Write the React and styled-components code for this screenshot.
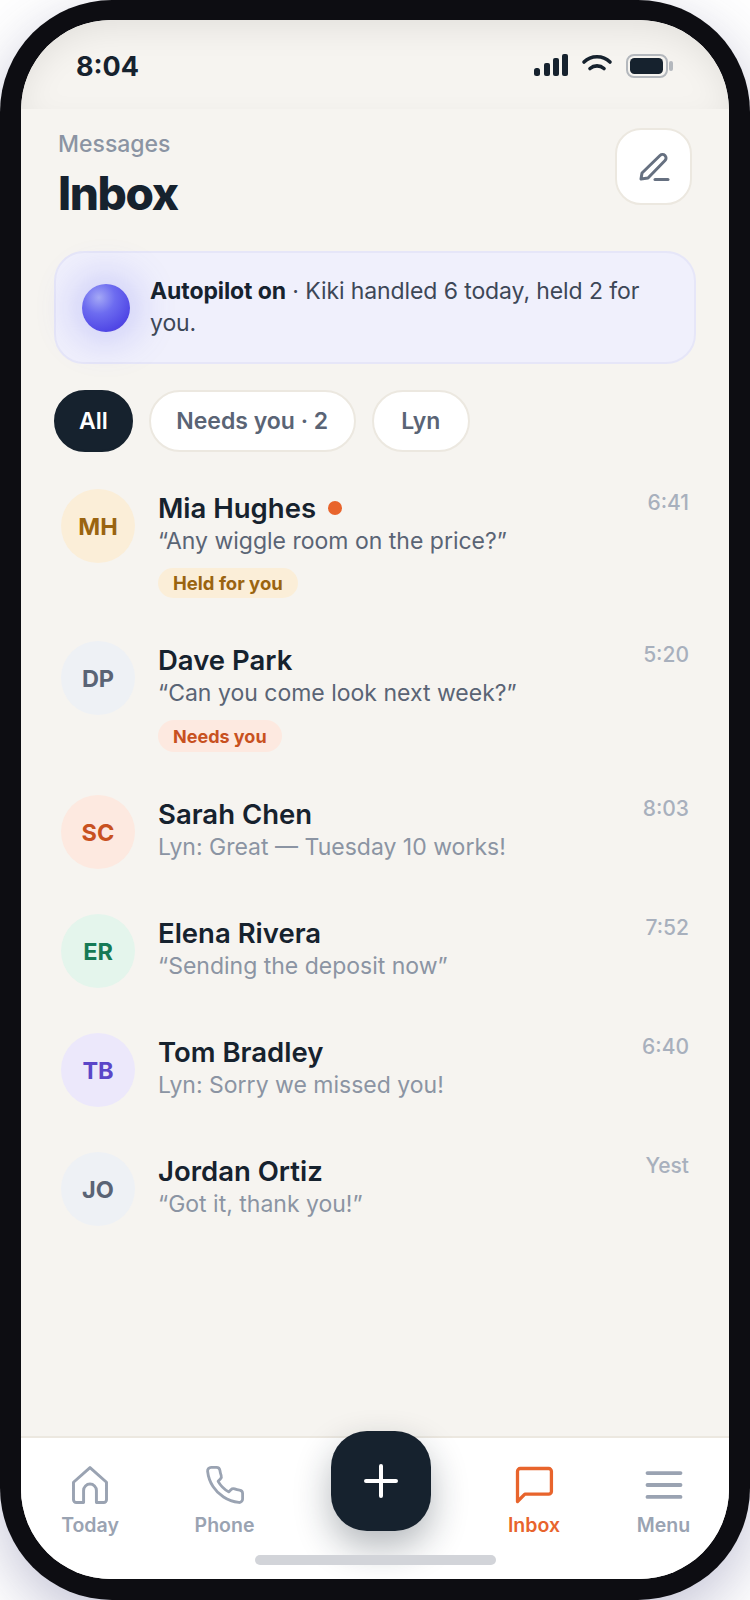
import React from 'react';
import styled, { createGlobalStyle } from 'styled-components';

const Global = createGlobalStyle`
    html, body {
        margin: 0;
        padding: 0;
        background: #fff;
    }
    body {
        width: 750px;
        height: 1600px;
        overflow: hidden;
        font-family: Inter, "Liberation Sans", sans-serif;
        -webkit-font-smoothing: antialiased;
    }
`;

const Phone = styled.div`
    width: 750px;
    height: 1600px;
    box-sizing: border-box;
    padding: 20px 21px 21px;
    background: #0d0d12;
    border-radius: 112px;
    box-shadow: 0 20px 60px rgba(60, 60, 120, .3);
`;

const Screen = styled.div`
    position: relative;
    height: 100%;
    display: flex;
    flex-direction: column;
    overflow: hidden;
    background: #f6f4f0;
    border-radius: 90px;
`;

const StatusBar = styled.div`
    flex: none;
    height: 89px;
    box-sizing: border-box;
    padding: 3px 55px 0 55px;
    display: flex;
    align-items: center;
    justify-content: space-between;
    background: #f6f4f0;
    border-radius: 90px 90px 0 0;
    box-shadow: inset 0 12px 36px -6px rgba(0, 0, 0, .09);
`;

const Clock = styled.span`
    font-size: 27px;
    font-weight: 700;
    color: #16222e;
`;

const StatusIcons = styled.div`
    display: flex;
    align-items: center;
`;

const Content = styled.div`
    flex: 1;
    min-height: 0;
    padding: 20px 33px 0 33px;
`;

const Header = styled.div`
    display: flex;
    justify-content: space-between;
    align-items: flex-start;
    height: 92px;
    padding: 0 4px;
`;

const Eyebrow = styled.div`
    font-size: 23px;
    line-height: 30px;
    font-weight: 500;
    color: #8b94a3;
`;

const Title = styled.h1`
    margin: 6px 0 0;
    font-size: 46px;
    line-height: 56px;
    font-weight: 800;
    letter-spacing: -1.4px;
    color: #16222e;
`;

const ComposeButton = styled.button`
    width: 77px;
    height: 77px;
    margin-top: -1px;
    padding: 0;
    border: 2px solid #ece8e0;
    border-radius: 26px;
    background: #fff;
    display: flex;
    align-items: center;
    justify-content: center;
`;

const Banner = styled.div`
    margin-top: 30px;
    height: 113px;
    box-sizing: border-box;
    display: flex;
    align-items: center;
    gap: 20px;
    padding: 0 28px 2px 26px;
    background: #f0f0fc;
    border: 2px solid #e6e6f8;
    border-radius: 30px;
`;

const Orb = styled.div`
    flex: none;
    width: 48px;
    height: 48px;
    margin-top: 2px;
    border-radius: 50%;
    background: radial-gradient(circle at 35% 28%, #a4a8f6 0%, #6d6cf0 35%, #4f46e5 75%, #6a3fb0 100%);
    box-shadow: 0 0 36px 10px rgba(99, 102, 241, .25);
`;

const BannerText = styled.div`
    font-size: 23px;
    line-height: 32px;
    letter-spacing: -.1px;
    color: #3d4757;
`;

const Strong = styled.strong`
    font-weight: 700;
    color: #16222e;
`;

const Chips = styled.div`
    margin-top: 26px;
    display: flex;
    gap: 16px;
`;

const Chip = styled.div`
    height: 62px;
    box-sizing: border-box;
    padding: 0 ${props => props.$pad || 25.5}px;
    display: flex;
    align-items: center;
    border-radius: 31px;
    font-size: 23px;
    font-weight: 600;
    border: 2px solid ${props => (props.$active ? '#16222e' : '#ece8e0')};
    background: ${props => (props.$active ? '#16222e' : '#fff')};
    color: ${props => (props.$active ? '#fff' : '#5a6475')};
`;

const List = styled.div`
    margin-top: 37px;
    padding: 0 7px;
`;

const Row = styled.div`
    display: flex;
    align-items: flex-start;
    gap: 23px;
    margin-bottom: ${props => (props.$tagged ? '43px' : '45px')};
`;

const Avatar = styled.div`
    flex: none;
    width: 74px;
    height: 74px;
    border-radius: 50%;
    display: flex;
    align-items: center;
    justify-content: center;
    font-size: 23.5px;
    font-weight: 700;
    background: ${props => props.$bg};
    color: ${props => props.$fg};
`;

const RowBody = styled.div`
    flex: 1;
    min-width: 0;
    padding-top: 1px;
`;

const NameLine = styled.div`
    display: flex;
    align-items: center;
    gap: 12px;
    height: 36px;
`;

const Name = styled.div`
    font-size: 27.5px;
    line-height: 36px;
    font-weight: 600;
    color: #16222e;
`;

const UnreadDot = styled.span`
    width: 14px;
    height: 14px;
    border-radius: 50%;
    background: #e8642c;
`;

const Preview = styled.div`
    font-size: 23px;
    line-height: 32px;
    margin-top: -1px;
    color: ${props => (props.$muted ? '#8b94a3' : '#5a6475')};
`;

const Tag = styled.div`
    width: fit-content;
    margin-top: 11px;
    height: ${props => (props.$kind === 'held' ? '30px' : '32px')};
    padding: 0 15px;
    border-radius: 16px;
    display: flex;
    align-items: center;
    font-size: ${props => (props.$kind === 'held' ? '18.5px' : '18px')};
    font-weight: 700;
    background: ${props => (props.$kind === 'held' ? '#fbeed8' : '#fde9e0')};
    color: ${props => (props.$kind === 'held' ? '#9a6410' : '#c8511f')};
`;

const Time = styled.div`
    flex: none;
    font-size: 21px;
    line-height: 26px;
    font-weight: 500;
    color: #a8b0bd;
    margin-top: 1px;
`;

const TabBar = styled.nav`
    flex: none;
    height: 143px;
    box-sizing: border-box;
    display: grid;
    grid-template-columns: 138px 131px 180px 128px 131px;
    background: #fff;
    border-top: 2px solid #ece8e0;
`;

const Tab = styled.div`
    display: flex;
    flex-direction: column;
    align-items: center;
    padding-top: 25px;
    gap: 5px;
    font-size: 19.5px;
    line-height: 26px;
    font-weight: 600;
    color: ${props => (props.$active ? '#e8642c' : '#9aa3b2')};
`;

const Fab = styled.button`
    position: absolute;
    left: 310px;
    bottom: 48px;
    width: 100px;
    height: 100px;
    padding: 0;
    border: 0;
    border-radius: 36px;
    background: #16222e;
    box-shadow: 0 16px 36px rgba(22, 34, 46, .32);
    display: flex;
    align-items: center;
    justify-content: center;
`;

const HomeBar = styled.div`
    position: absolute;
    left: 234px;
    bottom: 14px;
    width: 241px;
    height: 10px;
    border-radius: 5px;
    background: #d2d4d9;
`;

const Icon = ({ children, color = 'currentColor', width = 44, view = '0 0 24 24', sw = 1.6 }) => (
    <svg width={width} height={width} viewBox={view} fill="none" stroke={color} strokeWidth={sw} strokeLinecap="round" strokeLinejoin="round">
        {children}
    </svg>
);

const rows = [
    { id: 'MH', name: 'Mia Hughes', text: '“Any wiggle room on the price?”', time: '6:41', bg: '#fbeed8', fg: '#9a6410', dot: true, tag: 'held', tagText: 'Held for you' },
    { id: 'DP', name: 'Dave Park', text: '“Can you come look next week?”', time: '5:20', bg: '#eef1f5', fg: '#5a6475', tag: 'needs', tagText: 'Needs you' },
    { id: 'SC', name: 'Sarah Chen', text: 'Lyn: Great — Tuesday 10 works!', time: '8:03', bg: '#fde9e0', fg: '#c8511f', muted: true },
    { id: 'ER', name: 'Elena Rivera', text: '“Sending the deposit now”', time: '7:52', bg: '#e4f5ec', fg: '#167a55', muted: true },
    { id: 'TB', name: 'Tom Bradley', text: 'Lyn: Sorry we missed you!', time: '6:40', bg: '#ece8fb', fg: '#5b46c8', muted: true },
    { id: 'JO', name: 'Jordan Ortiz', text: '“Got it, thank you!”', time: 'Yest', bg: '#eef1f5', fg: '#5a6475', muted: true },
];

export default function App() {
    return (
        <>
            <Global />
            <Phone>
                <Screen>
                    <StatusBar>
                        <Clock>8:04</Clock>
                        <StatusIcons>
                            <svg width="140" height="26" viewBox="0 -1 140 26" fill="none">
                                <rect x="0" y="14" width="6" height="8" rx="2.500" fill="#16222e" />
                                <rect x="10" y="9" width="6" height="13" rx="2" fill="#16222e" />
                                <rect x="19" y="4" width="6" height="18" rx="2" fill="#16222e" />
                                <rect x="28" y="0" width="6" height="22" rx="2" fill="#16222e" />
                                <path d="M50 8 C57 1 69 1 76 8" stroke="#16222e" strokeWidth="3.600" strokeLinecap="round" />
                                <path d="M56 14.500 C60 11 66 11 70 14.500" stroke="#16222e" strokeWidth="3.600" strokeLinecap="round" />
                                <rect x="93" y="1" width="40" height="22" rx="7" stroke="#b4b8bd" strokeWidth="2" />
                                <rect x="96" y="4" width="33" height="16" rx="4.500" fill="#16222e" />
                                <rect x="135" y="7" width="4" height="10" rx="2" fill="#b4b8bd" />
                            </svg>
                        </StatusIcons>
                    </StatusBar>
                    <Content>
                        <Header>
                            <div>
                                <Eyebrow>Messages</Eyebrow>
                                <Title>Inbox</Title>
                            </div>
                            <ComposeButton aria-label="Compose">
                                <Icon width={34} color="#667080" view="0 0 34 34" sw={3}>
                                    <path d="M4 29 L5 23 L23 5.500 a3.500 3.500 0 0 1 5 5 L11 28 Z" />
                                    <path d="M18 29.500 H31" />
                                </Icon>
                            </ComposeButton>
                        </Header>
                        <Banner>
                            <Orb />
                            <BannerText>
                                <Strong>Autopilot on</Strong> · Kiki handled 6 today, held 2 for you.
                            </BannerText>
                        </Banner>
                        <Chips>
                            <Chip $active $pad={23}>All</Chip>
                            <Chip>Needs you · 2</Chip>
                            <Chip $pad={27.5}>Lyn</Chip>
                        </Chips>
                        <List>
                            {rows.map(r => (
                                <Row key={r.id} $tagged={!!r.tag}>
                                    <Avatar $bg={r.bg} $fg={r.fg}>{r.id}</Avatar>
                                    <RowBody>
                                        <NameLine>
                                            <Name>{r.name}</Name>
                                            {r.dot && <UnreadDot />}
                                        </NameLine>
                                        <Preview $muted={r.muted}>{r.text}</Preview>
                                        {r.tag && <Tag $kind={r.tag}>{r.tagText}</Tag>}
                                    </RowBody>
                                    <Time>{r.time}</Time>
                                </Row>
                            ))}
                        </List>
                    </Content>
                    <TabBar>
                        <Tab>
                            <Icon>
                                <path d="M3 10.500 L12 2.500 L21 10.500 V20 a1.500 1.500 0 0 1 -1.500 1.500 H15.500 V15 a3.500 3.500 0 0 0 -7 0 V21.500 H4.500 A1.500 1.500 0 0 1 3 20 Z" />
                            </Icon>
                            Today
                        </Tab>
                        <Tab>
                            <Icon view="-0.500 -0.500 25 25">
                                <path d="M22 16.920v3a2 2 0 0 1-2.180 2 19.790 19.790 0 0 1-8.630-3.070 19.500 19.500 0 0 1-6-6 19.790 19.790 0 0 1-3.070-8.670A2 2 0 0 1 4.110 2h3a2 2 0 0 1 2 1.720 12.840 12.840 0 0 0 .700 2.810 2 2 0 0 1-.450 2.110L8.090 9.910a16 16 0 0 0 6 6l1.270-1.270a2 2 0 0 1 2.110-.450 12.840 12.840 0 0 0 2.810.700A2 2 0 0 1 22 16.920z" />
                            </Icon>
                            Phone
                        </Tab>
                        <div />
                        <Tab $active>
                            <Icon sw={1.800}>
                                <path d="M4.500 3 H20 a1.500 1.500 0 0 1 1.500 1.500 V15.500 a1.500 1.500 0 0 1 -1.500 1.500 H7 L3 21 V4.500 a1.500 1.500 0 0 1 1.500 -1.500 Z" />
                            </Icon>
                            Inbox
                        </Tab>
                        <Tab>
                            <Icon sw={2.100}>
                                <path d="M3 5.500 H21 M3 12 H21 M3 18.500 H21" />
                            </Icon>
                            Menu
                        </Tab>
                    </TabBar>
                    <Fab aria-label="New">
                        <Icon width={36} color="#fff" view="0 0 36 36" sw={4}>
                            <path d="M18 3 V33 M3 18 H33" />
                        </Icon>
                    </Fab>
                    <HomeBar />
                </Screen>
            </Phone>
        </>
    );
}
